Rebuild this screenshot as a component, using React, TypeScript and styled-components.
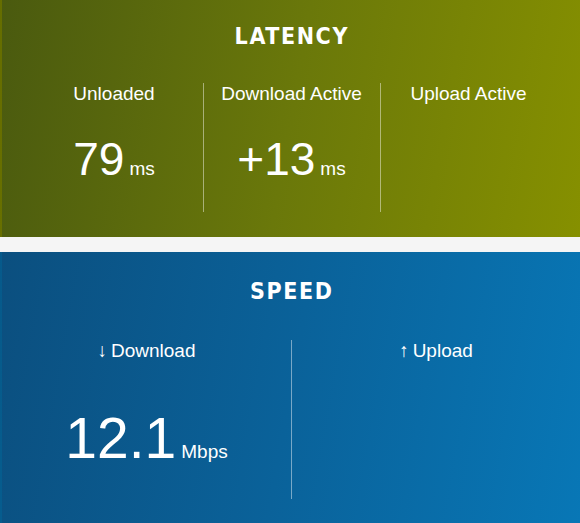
import React from "react";
import styled, { createGlobalStyle } from "styled-components";

const GlobalStyle = createGlobalStyle`
  html, body {
    margin: 0;
    padding: 0;
    background: #f5f5f5;
  }
  body {
    font-family: "Liberation Sans", Arial, sans-serif;
    color: #ffffff;
  }
`;

const Page = styled.div`
  display: flex;
  flex-direction: column;
  gap: 15px;
  width: 580px;
`;

const Panel = styled.section<{ $variant: "latency" | "speed" }>`
  box-sizing: border-box;
  border-left: 2px solid rgba(0, 0, 0, 0.22);
  padding: ${(p) => (p.$variant === "latency" ? "24px 0 25px" : "27px 0 25px")};
  background: ${(p) =>
    p.$variant === "latency"
      ? "linear-gradient(100deg, #4a5a0f 0%, #6a780a 50%, #869000 100%)"
      : "linear-gradient(100deg, #0b4f7f 0%, #0a629a 50%, #0877b6 100%)"};
`;

const Title = styled.h2`
  margin: 0;
  font-family: "Liberation Sans Narrow", "DejaVu Sans Condensed", "Liberation Sans", sans-serif;
  font-weight: 700;
  font-size: 23px;
  line-height: 24px;
  letter-spacing: 1.6px;
  text-align: center;
  text-indent: 1.6px;
`;

const Row = styled.div<{ $cols: number; $colWidth: string; $gapTop: number }>`
  display: grid;
  grid-template-columns: repeat(${(p) => p.$cols}, ${(p) => p.$colWidth});
  justify-content: center;
  margin-top: ${(p) => p.$gapTop}px;
`;

const Column = styled.div<{ $height: number }>`
  display: flex;
  flex-direction: column;
  align-items: center;
  height: ${(p) => p.$height}px;
  & + & {
    border-left: 1px solid rgba(255, 255, 255, 0.45);
  }
`;

const Label = styled.div`
  font-size: 19px;
  line-height: 22px;
  white-space: nowrap;
`;

const Arrow = styled.span`
  margin-right: 4px;
`;

const Value = styled.div<{ $size: number; $gapTop: number }>`
  display: flex;
  align-items: baseline;
  margin-top: ${(p) => p.$gapTop}px;
  font-size: ${(p) => p.$size}px;
  line-height: 1;
  white-space: nowrap;
`;

const Unit = styled.span<{ $gap: number }>`
  font-size: 19px;
  margin-left: ${(p) => p.$gap}px;
`;

export default function App() {
  return (
    <>
      <GlobalStyle />
      <Page>
        <Panel $variant="latency">
          <Title>LATENCY</Title>
          <Row $cols={3} $colWidth="177px" $gapTop={35}>
            <Column $height={129}>
              <Label>Unloaded</Label>
              <Value $size={46} $gapTop={31}>
                79<Unit $gap={5}>ms</Unit>
              </Value>
            </Column>
            <Column $height={129}>
              <Label>Download Active</Label>
              <Value $size={46} $gapTop={31}>
                +13<Unit $gap={5}>ms</Unit>
              </Value>
            </Column>
            <Column $height={129}>
              <Label>Upload Active</Label>
            </Column>
          </Row>
        </Panel>
        <Panel $variant="speed">
          <Title>SPEED</Title>
          <Row $cols={2} $colWidth="1fr" $gapTop={37}>
            <Column $height={159}>
              <Label>
                <Arrow>↓</Arrow>Download
              </Label>
              <Value $size={57} $gapTop={48}>
                12.1<Unit $gap={5}>Mbps</Unit>
              </Value>
            </Column>
            <Column $height={159}>
              <Label>
                <Arrow>↑</Arrow>Upload
              </Label>
            </Column>
          </Row>
        </Panel>
      </Page>
    </>
  );
}
